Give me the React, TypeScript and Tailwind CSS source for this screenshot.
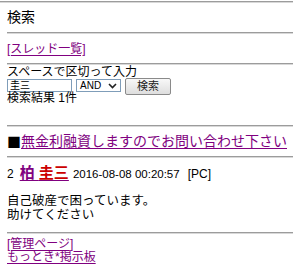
import React from 'react';

const linkCls = 'text-[#800080] underline decoration-[#800080] underline-offset-[2px]';

const Rule = ({ full }: { full?: boolean }) => (
  <div className={`border-t border-t-[#9c9c9c] border-b border-b-[#d8d8d8] ${full ? '-ml-[7px]' : ''}`} />
);

const SearchForm = () => (
  <div className="pt-[1px] pb-[19px] text-[12px]">
    <p className="leading-[13px]">スペースで区切って入力</p>
    <div className="flex h-[13px] items-start gap-[4px]">
      <div className="flex h-[13px] w-[65px] items-center border border-[#7f9db9] bg-white px-[2px] text-[10px] leading-[11px] text-black">
        圭三
      </div>
      <div className="flex h-[13px] w-[45px] items-center justify-between border border-[#7f9db9] bg-white pl-[3px] pr-[3px] text-[10px] leading-[11px]">
        <span>AND</span>
        <svg width="9" height="6" viewBox="0 0 9 6">
          <path d="M1 1 L4.5 4.5 L8 1" fill="none" stroke="#222" strokeWidth="1.6" />
        </svg>
      </div>
      <button className="-mt-[1px] h-[17px] w-[46px] rounded-[2px] border border-[#8a8a8a] bg-gradient-to-b from-[#f8f8f8] to-[#dedede] text-[11px] leading-[15px] text-[#222]">
        検索
      </button>
    </div>
    <p className="leading-[13.5px]">検索結果 1件</p>
  </div>
);

const Post = () => (
  <div className="pt-[7px] pb-[10px]">
    <div className="flex items-baseline whitespace-nowrap text-[12px] leading-[16px]">
      <span>2</span>
      <a className={`ml-[6px] text-[15px] font-bold ${linkCls}`}>
        柏 <span className="text-[#cc0000]">圭三</span>
      </a>
      <span className="ml-[4px] text-[11.5px]">2016-08-08 00:20:57</span>
      <span className="ml-[8px]">[PC]</span>
    </div>
    <div className="mt-[12px] text-[12.5px] leading-[14px]">
      <p>自己破産で困っています。</p>
      <p>助けてください</p>
    </div>
  </div>
);

export default function App() {
  return (
    <div className="w-[300px] bg-white pl-[7px] pr-[7px] pt-[1px] font-['Liberation_Sans','Noto_Sans_CJK_JP',sans-serif] text-black">
      <Rule full />
      <div className="flex h-[29px] items-center text-[14px]">検索</div>
      <Rule />
      <div className="flex h-[29px] items-center text-[12px]">
        <a className={linkCls}>[スレッド一覧]</a>
      </div>
      <Rule />
      <SearchForm />
      <Rule />
      <div className="flex h-[29px] items-center whitespace-nowrap text-[14px]">
        <span className="font-['Noto_Sans_CJK_JP',sans-serif]">■</span>
        <a className={linkCls}>無金利融資しますのでお問い合わせ下さい</a>
      </div>
      <Rule />
      <Post />
      <Rule />
      <div className="pt-[4px] text-[12px] leading-[13.5px]">
        <a className={`block w-fit ${linkCls}`}>[管理ページ]</a>
        <a className={`block w-fit ${linkCls}`}>もっとき*掲示板</a>
      </div>
    </div>
  );
}
